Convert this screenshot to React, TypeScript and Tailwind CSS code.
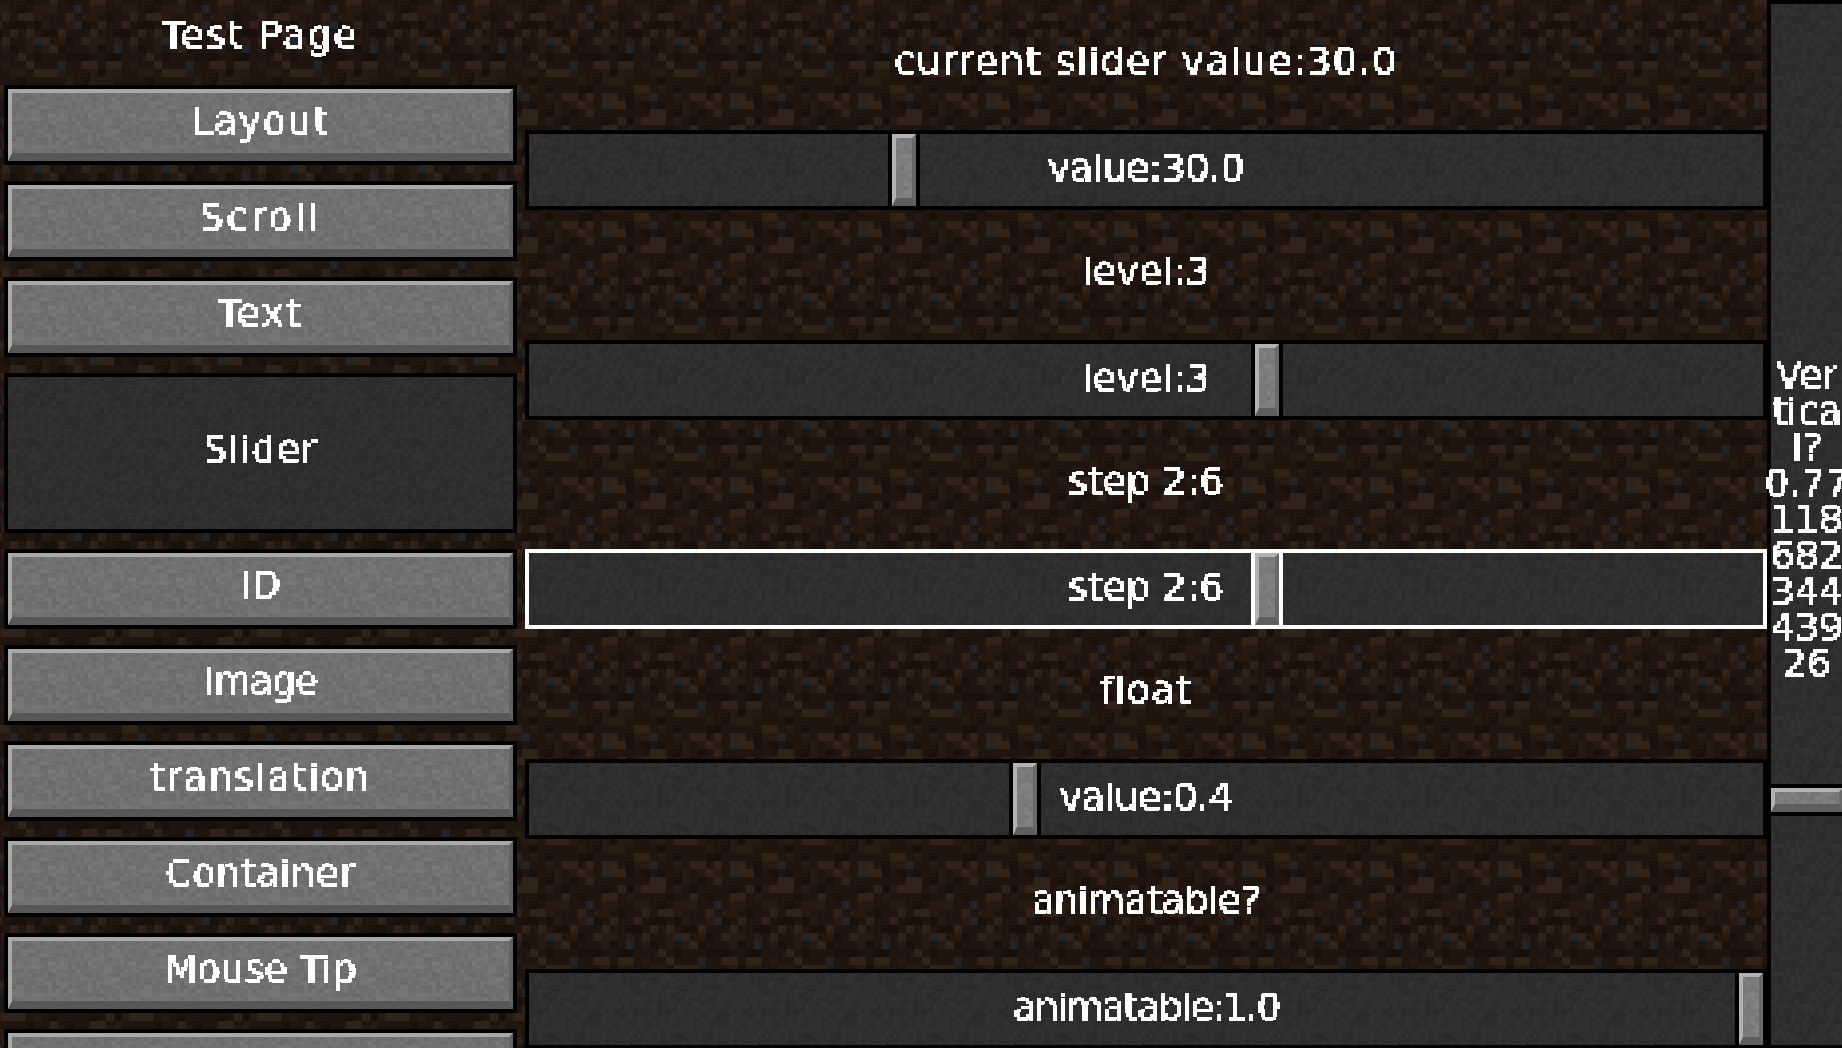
const DIRT = [
  '211B122112210122',
  '1131221011313321',
  '112B013113100102',
  '0311131100131310',
  '12013221213112B3',
  '30111201B1201212',
  '1100011001113101',
  '1B11331331211311',
  '3211120221122133',
  '1121022211110111',
  '1100111113312101',
  '33131331022B1121',
  '12321B3301010112',
  '1013111111133102',
  '0111101302333121',
  '3101133121111011',
];

const DIRT_COLORS: Record<string, string> = {
  '0': '#18100a',
  '1': '#1f150e',
  '2': '#261a11',
  '3': '#312317',
  B: '#1f2529',
};

function svgUrl(size: number, body: string) {
  const svg = `<svg xmlns="http://www.w3.org/2000/svg" width="${size}" height="${size}" shape-rendering="crispEdges">${body}</svg>`;
  return `url("data:image/svg+xml,${encodeURIComponent(svg)}")`;
}

function dirtTile() {
  let body = '';
  DIRT.forEach((row, y) => {
    row.split('').forEach((c, x) => {
      body += `<rect x="${x * 8}" y="${y * 8}" width="8" height="8" fill="${DIRT_COLORS[c]}"/>`;
    });
  });
  return svgUrl(128, body);
}

// stone-like noise, seeded so every load looks the same
function noiseTile(base: number, spread: number, seed: number) {
  let s = seed;
  let body = `<rect width="128" height="128" fill="rgb(${base},${base},${base})"/>`;
  for (let y = 0; y < 32; y++) {
    for (let x = 0; x < 32; x++) {
      s = (s * 1103515245 + 12345) & 0x7fffffff;
      const v = base + Math.round((((s >> 8) % 100) / 100 - 0.5) * spread);
      body += `<rect x="${x * 4}" y="${y * 4}" width="4" height="4" fill="rgb(${v},${v},${v})"/>`;
    }
  }
  return svgUrl(128, body);
}

const dirtBg = dirtTile();
const stoneBg = noiseTile(113, 14, 7);
const panelBg = noiseTile(46, 8, 31);
const handleBg = noiseTile(124, 14, 11);

const textStyle = "block whitespace-nowrap font-['DejaVu_Sans',sans-serif] text-[38px] leading-9 text-white [filter:url(#px)]";

const navAbove = [
  { label: 'Layout', track: 'tracking-[1.5px]' },
  { label: 'Scroll', track: 'tracking-[3px]' },
  { label: 'Text', track: 'tracking-[2px]' },
];
const navBelow = [
  { label: 'ID', track: '' },
  { label: 'Image', track: 'tracking-[-1px]' },
  { label: 'translation', track: 'tracking-[1.5px]' },
  { label: 'Container', track: 'tracking-[0.5px]' },
  { label: 'Mouse Tip', track: '' },
  { label: '', track: '' },
];

function NavButton({ label, track }: { label: string; track: string }) {
  return (
    <div className="h-20 w-[513px] shrink-0 border-4 border-black">
      <div
        className="flex h-full items-center justify-center border-t-4 border-r-4 border-b-8 border-l-4 border-t-[#a9a9a9] border-r-[#636363] border-b-[#575757] border-l-[#a9a9a9] pb-1"
        style={{ backgroundImage: stoneBg }}
      >
        {label && <span className={`${textStyle} ${track}`}>{label}</span>}
      </div>
    </div>
  );
}

function Label({ text, track = '', tall = true }: { text: string; track?: string; tall?: boolean }) {
  return (
    <div className={`flex shrink-0 items-center justify-center pb-2 ${tall ? 'h-[130px]' : 'h-[129px]'}`}>
      <span className={`${textStyle} ${track}`}>{text}</span>
    </div>
  );
}

function Bevel({ bg }: { bg: string }) {
  return (
    <div
      className="h-full w-full border-t-4 border-r-4 border-b-8 border-l-4 border-t-[#b2b2b2] border-r-[#696969] border-b-[#5e5e5e] border-l-[#b2b2b2]"
      style={{ backgroundImage: bg }}
    />
  );
}

function Slider({ text, left, track = '', focused }: { text: string; left: string; track?: string; focused?: boolean }) {
  return (
    <div
      className={`relative flex h-20 shrink-0 items-center justify-center border-4 pb-1 ${focused ? 'border-white' : 'border-black'}`}
      style={{ backgroundImage: panelBg }}
    >
      <span className={`${textStyle} ${track}`}>{text}</span>
      <div className={`absolute top-0 bottom-0 w-8 border-x-4 ${left} ${focused ? 'border-white' : 'border-black'}`}>
        <Bevel bg={handleBg} />
      </div>
    </div>
  );
}

export default function App() {
  return (
    <div className="flex h-[1048px] w-[1842px] overflow-hidden [background-position:50px_5px]" style={{ backgroundImage: dirtBg }}>
      <svg className="absolute h-0 w-0">
        <defs>
          <filter id="px" x="-5%" y="-25%" width="110%" height="150%" colorInterpolationFilters="sRGB">
            <feFlood x="1" y="1" width="2" height="2" floodColor="#fff" />
            <feComposite width="4" height="4" />
            <feTile result="grid" />
            <feComposite in="SourceGraphic" in2="grid" operator="in" />
            <feMorphology operator="dilate" radius="1" />
            <feComponentTransfer>
              <feFuncA type="discrete" tableValues="0 0 1 1 1 1 1 1" />
            </feComponentTransfer>
          </filter>
        </defs>
      </svg>

      {/* Left menu */}
      <div className="flex w-[525px] shrink-0 flex-col pl-1">
        <div className="flex h-[85px] w-[513px] shrink-0 justify-center pt-[17px]">
          <span className={`${textStyle} tracking-[2px]`}>Test Page</span>
        </div>
        <div className="flex flex-col gap-4">
          {navAbove.map((item) => (
            <NavButton key={item.label} label={item.label} track={item.track} />
          ))}
          <div className="h-40 w-[513px] shrink-0 border-4 border-black">
            <div className="flex h-full items-center justify-center pb-2" style={{ backgroundImage: panelBg }}>
              <span className={`${textStyle} tracking-[1px]`}>Slider</span>
            </div>
          </div>
          {navBelow.map((item, i) => (
            <NavButton key={i} label={item.label} track={item.track} />
          ))}
        </div>
      </div>

      {/* Slider list */}
      <div className="flex w-[1242px] shrink-0 flex-col">
        <Label text="current slider value:30.0" track="tracking-[1.5px]" />
        <Slider text="value:30.0" left="left-[359px]" track="tracking-[-0.5px]" />
        <Label text="level:3" />
        <Slider text="level:3" left="left-[722px]" />
        <Label text="step 2:6" tall={false} />
        <Slider text="step 2:6" left="left-[722px]" focused />
        <Label text="float" track="tracking-[1.5px]" />
        <Slider text="value:0.4" left="left-[480px]" track="tracking-[-0.5px]" />
        <Label text="animatable?" track="tracking-[-0.5px]" />
        <Slider text="animatable:1.0" left="left-[1206px]" track="tracking-[-1.5px]" />
      </div>

      {/* Vertical slider */}
      <div
        className="relative flex h-[1049px] w-20 shrink-0 items-center justify-center border-4 border-black pb-3"
        style={{ backgroundImage: panelBg }}
      >
        <span className={`${textStyle} text-center`}>
          Ver
          <br />
          tica
          <br />
          l?
          <br />
          0.77
          <br />
          118
          <br />
          682
          <br />
          344
          <br />
          439
          <br />
          26
        </span>
        <div className="absolute top-[780px] right-0 left-0 h-8 border-y-4 border-black">
          <Bevel bg={handleBg} />
        </div>
      </div>
    </div>
  );
}
